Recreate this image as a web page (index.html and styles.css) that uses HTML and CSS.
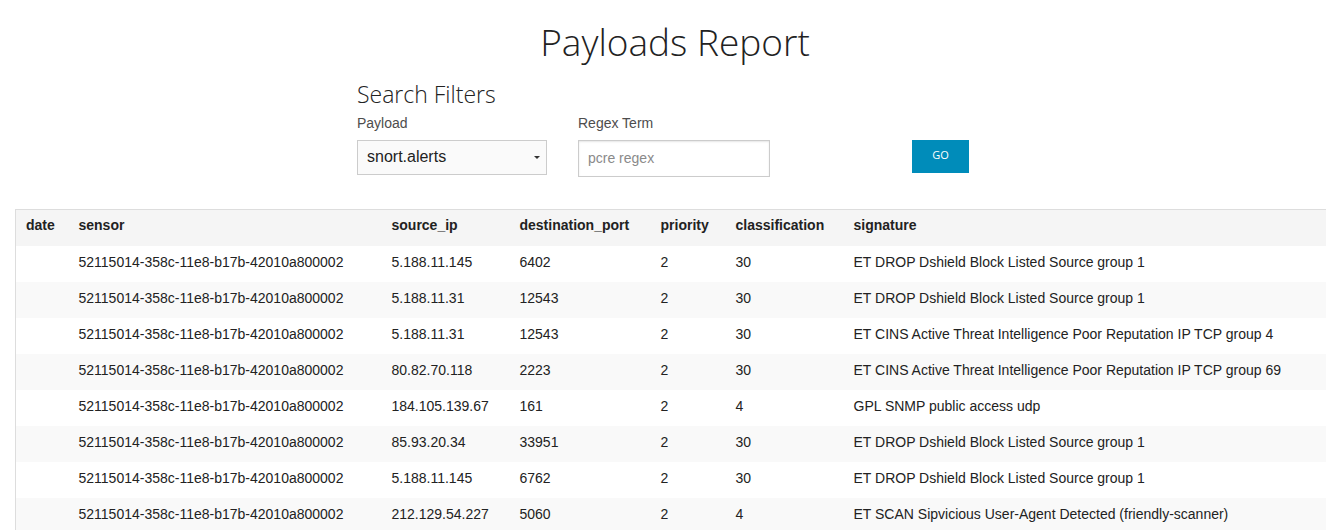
FILE: index.html
```html
<!DOCTYPE html>
<html>
<head>
<meta charset="utf-8">
<title>Payloads Report</title>
<link rel="stylesheet" href="styles.css">
</head>
<body>
<h1 class="title">Payloads Report</h1>
<section class="filters">
  <h4 class="filters-title">Search Filters</h4>
  <div class="filters-row">
    <div class="field field-payload">
      <label class="field-label">Payload</label>
      <div class="select">
        <span class="select-value">snort.alerts</span>
        <span class="select-arrow"></span>
      </div>
    </div>
    <div class="field field-regex">
      <label class="field-label">Regex Term</label>
      <input class="text-input" type="text" placeholder="pcre regex">
    </div>
    <div class="field field-go">
      <button class="go-button">GO</button>
    </div>
  </div>
</section>
<div class="table-wrap">
  <table class="report">
    <colgroup>
      <col class="c-date"><col class="c-sensor"><col class="c-src"><col class="c-port"><col class="c-prio"><col class="c-class"><col class="c-sig">
    </colgroup>
    <thead>
      <tr><th>date</th><th>sensor</th><th>source_ip</th><th>destination_port</th><th>priority</th><th>classification</th><th>signature</th></tr>
    </thead>
    <tbody>
      <tr><td></td><td>52115014-358c-11e8-b17b-42010a800002</td><td>5.188.11.145</td><td>6402</td><td>2</td><td>30</td><td>ET DROP Dshield Block Listed Source group 1</td></tr>
      <tr><td></td><td>52115014-358c-11e8-b17b-42010a800002</td><td>5.188.11.31</td><td>12543</td><td>2</td><td>30</td><td>ET DROP Dshield Block Listed Source group 1</td></tr>
      <tr><td></td><td>52115014-358c-11e8-b17b-42010a800002</td><td>5.188.11.31</td><td>12543</td><td>2</td><td>30</td><td>ET CINS Active Threat Intelligence Poor Reputation IP TCP group 4</td></tr>
      <tr><td></td><td>52115014-358c-11e8-b17b-42010a800002</td><td>80.82.70.118</td><td>2223</td><td>2</td><td>30</td><td>ET CINS Active Threat Intelligence Poor Reputation IP TCP group 69</td></tr>
      <tr><td></td><td>52115014-358c-11e8-b17b-42010a800002</td><td>184.105.139.67</td><td>161</td><td>2</td><td>4</td><td>GPL SNMP public access udp</td></tr>
      <tr><td></td><td>52115014-358c-11e8-b17b-42010a800002</td><td>85.93.20.34</td><td>33951</td><td>2</td><td>30</td><td>ET DROP Dshield Block Listed Source group 1</td></tr>
      <tr><td></td><td>52115014-358c-11e8-b17b-42010a800002</td><td>5.188.11.145</td><td>6762</td><td>2</td><td>30</td><td>ET DROP Dshield Block Listed Source group 1</td></tr>
      <tr><td></td><td>52115014-358c-11e8-b17b-42010a800002</td><td>212.129.54.227</td><td>5060</td><td>2</td><td>4</td><td>ET SCAN Sipvicious User-Agent Detected (friendly-scanner)</td></tr>
    </tbody>
  </table>
</div>
</body>
</html>
```
FILE: styles.css
```css
html, body {
  margin: 0;
  padding: 0;
  background: #fff;
  overflow: hidden;
}
body {
  font-family: "Liberation Sans", Arial, sans-serif;
  color: #222;
}
.title {
  margin: 20px 0 0;
  padding-left: 24px;
  font-family: "Open Sans", sans-serif;
  font-weight: 300;
  font-size: 37px;
  line-height: 43px;
  text-align: center;
  color: #222;
}
.filters {
  width: 612px;
  margin: 18px auto 0;
}
.filters-title {
  margin: 0;
  font-family: "Open Sans", sans-serif;
  font-weight: 300;
  font-size: 23px;
  line-height: 26px;
  color: #222;
}
.filters-row {
  display: flex;
  align-items: flex-end;
  margin-top: 6px;
}
.field {
  display: flex;
  flex-direction: column;
}
.field-payload { width: 192px; }
.field-regex { width: 192px; margin-left: 31px; }
.field-go { margin-left: 142px; align-self: flex-start; padding-top: 27px; }
.field-label {
  font-size: 14px;
  line-height: 21px;
  color: #4d4d4d;
  margin-bottom: 6px;
}
.select {
  height: 35px;
  box-sizing: border-box;
  border: 1px solid #ccc;
  background: #fafafa;
  display: flex;
  align-items: center;
  justify-content: space-between;
  padding: 0 6px 1px 9px;
  margin-bottom: 2px;
}
.select-value {
  font-size: 16px;
  color: #222;
}
.select-arrow {
  width: 0;
  height: 0;
  border-left: 3px solid transparent;
  border-right: 3px solid transparent;
  border-top: 3px solid #333;
}
.text-input {
  height: 37px;
  box-sizing: border-box;
  border: 1px solid #ccc;
  background: #fff;
  box-shadow: inset 0 1px 2px rgba(0,0,0,0.1);
  padding: 0 9px 2px;
  font-family: "Liberation Sans", Arial, sans-serif;
  font-size: 14px;
  color: #222;
  margin: 0;
  outline: none;
}
.text-input::placeholder { color: #8a8a8a; }
.go-button {
  width: 57px;
  height: 33px;
  border: none;
  background: #008cba;
  color: #fff;
  font-family: "Open Sans", sans-serif;
  font-size: 11px;
  padding: 0 0 4px;
  margin: 0;
}
.table-wrap {
  padding-left: 15px;
  margin-top: 32px;
}
.report {
  width: 1330px;
  table-layout: fixed;
  border-collapse: collapse;
  border: 1px solid #ddd;
  font-size: 14px;
}
.c-date { width: 53px; }
.c-sensor { width: 313px; }
.c-src { width: 128px; }
.c-port { width: 141px; }
.c-prio { width: 75px; }
.c-class { width: 118px; }
.report thead { background: #f5f5f5; }
.report th {
  text-align: left;
  font-weight: bold;
  color: #222;
  padding: 6px 10px 12px;
  line-height: 18px;
}
.report td {
  padding: 7px 10px 11px;
  line-height: 18px;
  color: #222;
  white-space: nowrap;
}
.report tbody tr:nth-child(even) { background: #f9f9f9; }
```
